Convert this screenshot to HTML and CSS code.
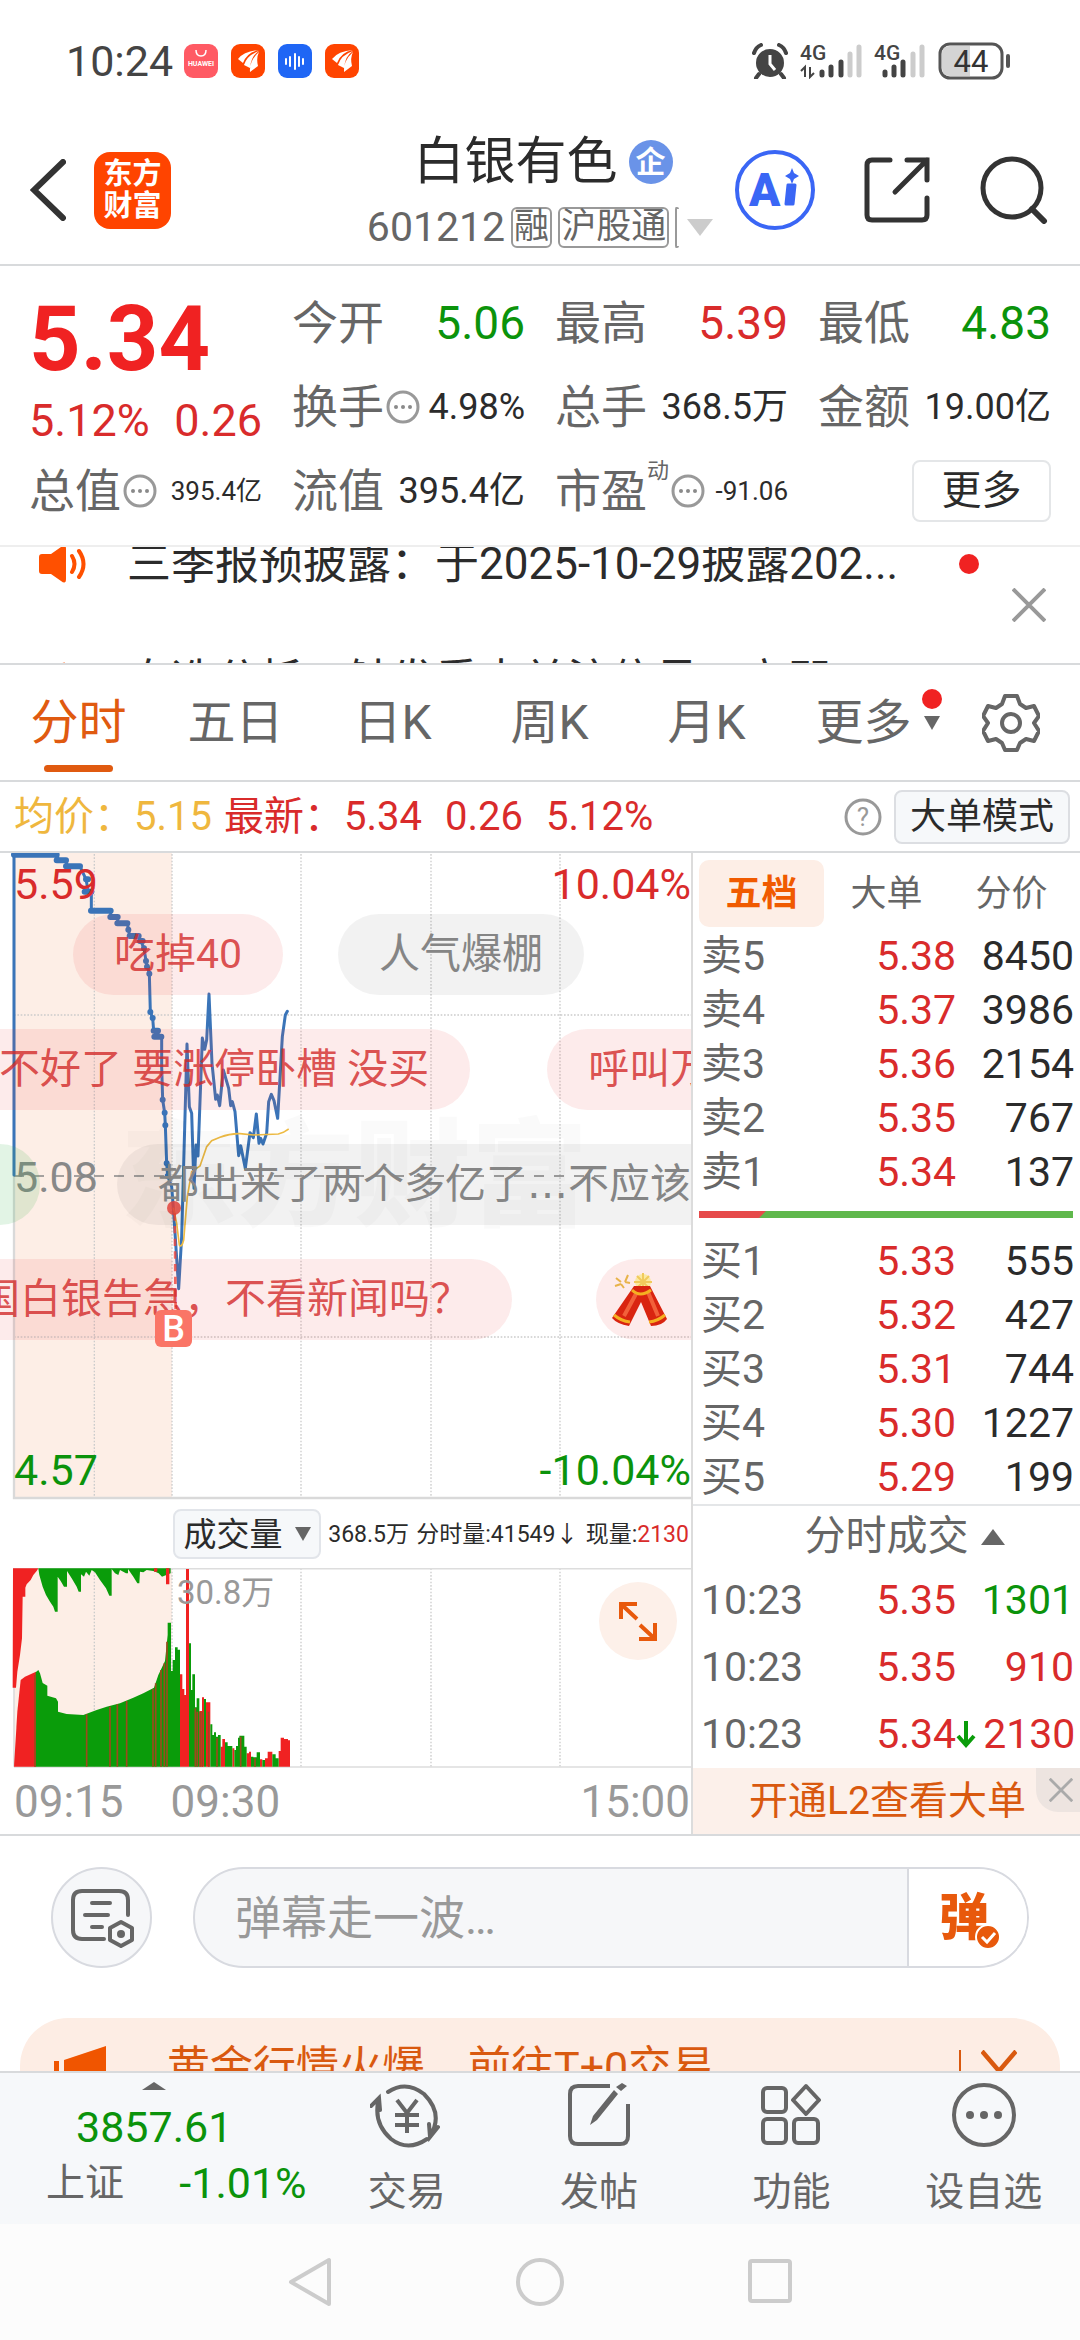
FILE: index.html
```html
<!DOCTYPE html>
<html lang="zh-CN">
<head>
<meta charset="utf-8">
<meta name="viewport" content="width=device-width">
<title>白银有色 601212</title>
<link rel="stylesheet" href="styles.css">
</head>
<body>
<svg width="0" height="0" class="defs" aria-hidden="true">
  <symbol id="info" viewBox="0 0 34 34"><circle cx="17" cy="17" r="15" fill="none" stroke="#999" stroke-width="3"/><g fill="#8a8a8a"><circle cx="10" cy="17" r="2"/><circle cx="17" cy="17" r="2"/><circle cx="24" cy="17" r="2"/></g></symbol>
  <symbol id="horn" viewBox="0 0 48 38"><path d="M3 9h9L22 2q5-4 5 2v30q0 6-5 2l-10-7H3q-3 0-3-3V12q0-3 3-3z" fill="#ff5000"/><path d="M33 11q5 8 0 16M40 6q9 13 0 26" fill="none" stroke="#ff5000" stroke-width="4" stroke-linecap="round"/></symbol>
  <symbol id="cross" viewBox="0 0 34 34"><path d="M1 1l32 32M33 1L1 33" fill="none" stroke="currentColor" stroke-width="4"/></symbol>
  <symbol id="em" viewBox="0 0 34 34"><rect width="34" height="34" rx="9" fill="#ff4400"/><path d="M7 15q6-8 21-9-12 2-16 13zM13 21q3-10 15-14-8 5-9 17zM19 28q-1-11 9-20-3 6-1 14z" fill="#fff"/></symbol>
</svg>

<header class="status">
  <span class="clock">10:24</span>
  <span class="notes">
    <svg width="34" height="34" viewBox="0 0 34 34"><rect width="34" height="34" rx="9" fill="#ff5a64"/><path d="M12 6q0 6 5 6t5-6" fill="none" stroke="#fff" stroke-width="1.5"/><text x="17" y="22" font-size="7" font-weight="700" text-anchor="middle" fill="#fff">HUAWEI</text></svg>
    <svg width="34" height="34"><use href="#em"/></svg>
    <svg width="34" height="34" viewBox="0 0 34 34"><rect width="34" height="34" rx="9" fill="#1f66f5"/><path d="M8 15v5M12 13v9M17 10v15M21 13v9M25 15v5" stroke="#fff" stroke-width="2" stroke-linecap="round"/></svg>
    <svg width="34" height="34"><use href="#em"/></svg>
  </span>
  <span class="radio">
    <svg width="36" height="36" viewBox="0 0 36 36"><circle cx="18" cy="20" r="14" fill="#444"/><path d="M18 12v9l5 6" fill="none" stroke="#fff" stroke-width="3"/><path d="M2 10Q4 4 9 2M34 10Q32 4 27 2M7 31l-3 4M29 31l3 4" stroke="#444" stroke-width="4" fill="none" stroke-linecap="round"/></svg>
    <svg width="62" height="36" viewBox="0 0 62 36"><text x="0" y="17" font-size="21" font-weight="500" fill="#444">4G</text><path d="M5 34V24l-4 4M10 24v10l4-4" fill="none" stroke="#444" stroke-width="2"/><g stroke-width="5" stroke-linecap="round"><path d="M22 29v3M31 24v8M41 19v13" stroke="#444"/><path d="M50 11v21M59 4v28" stroke="#ccc"/></g></svg>
    <svg width="52" height="36" viewBox="0 0 52 36"><text x="0" y="17" font-size="21" font-weight="500" fill="#444">4G</text><g stroke-width="5" stroke-linecap="round"><path d="M11 29v3M20 24v8M29 19v13" stroke="#444"/><path d="M39 11v21M48 4v28" stroke="#ccc"/></g></svg>
    <svg width="74" height="38" viewBox="0 0 74 38"><rect x="2" y="2" width="62" height="34" rx="10" fill="#fff" stroke="#555" stroke-width="3"/><path d="M12 4h20v30H12q-8 0-8-8V12q0-8 8-8z" fill="#d4d4d4"/><path d="M70 14v10" stroke="#555" stroke-width="4" stroke-linecap="round"/><text x="33" y="30" font-size="31" text-anchor="middle" fill="#333">44</text></svg>
  </span>
</header>

<nav class="head">
  <div class="head-left">
    <button class="plain" aria-label="返回"><svg width="36" height="62" viewBox="0 0 36 62"><path d="M33 3L4 31l29 28" fill="none" stroke="#333" stroke-width="6" stroke-linecap="round"/></svg></button>
    <a class="logo" href="#">东方<br>财富</a>
  </div>
  <div class="head-mid">
    <h1>白银有色<span class="ent">企</span></h1>
    <div class="code"><span>601212</span><span class="tag">融</span><span class="tag">沪股通</span><span class="tag cut"></span><i class="down"></i></div>
  </div>
  <div class="head-right">
    <button class="plain" aria-label="AI"><svg width="80" height="80" viewBox="0 0 80 80"><circle cx="40" cy="40" r="38" fill="#fff" stroke="#3a66f5" stroke-width="4"/><text x="14" y="56" font-size="46" font-weight="900" fill="#3a66f5">A</text><path d="M53 35h7l-2 19h-7z" fill="#3a66f5" stroke="#3a66f5" stroke-width="3" stroke-linejoin="round"/><path d="M57 18l2 5 5 3-5 3-2 5-2-5-5-3 5-3z" fill="#3a66f5"/></svg></button>
    <button class="plain" aria-label="分享"><svg width="68" height="68" viewBox="0 0 68 68"><path d="M26 4H8Q3 4 3 9v50q0 5 5 5h50q5 0 5-5V42M43 4h20v20M63 4L31 36" fill="none" stroke="#333" stroke-width="5" stroke-linecap="round"/></svg></button>
    <button class="plain" aria-label="搜索"><svg width="68" height="68" viewBox="0 0 68 68"><circle cx="32" cy="32" r="29" fill="none" stroke="#333" stroke-width="5"/><path d="M52 53l12 12" stroke="#333" stroke-width="6" stroke-linecap="round"/></svg></button>
  </div>
</nav>

<main>
  <section class="quote">
    <div class="last red">5.34</div>
    <div class="q"><span>今开</span><b class="green">5.06</b></div>
    <div class="q"><span>最高</span><b class="red">5.39</b></div>
    <div class="q"><span>最低</span><b class="green">4.83</b></div>
    <div class="chg red"><span>5.12%</span><span>0.26</span></div>
    <div class="q mid"><span>换手</span><svg width="34" height="34"><use href="#info"/></svg><b>4.98%</b></div>
    <div class="q mid"><span>总手</span><b>368.5万</b></div>
    <div class="q mid"><span>金额</span><b>19.00亿</b></div>
    <div class="q small"><span>总值</span><svg width="34" height="34"><use href="#info"/></svg><b>395.4亿</b></div>
    <div class="q mid"><span>流值</span><b>395.4亿</b></div>
    <div class="q small"><span>市盈</span><sup>动</sup><svg width="34" height="34"><use href="#info"/></svg><b>-91.06</b></div>
    <button class="more">更多</button>
  </section>

  <section class="ticker">
    <ul>
      <li><svg width="48" height="38"><use href="#horn"/></svg><a href="#">三季报预披露：于2025-10-29披露202...</a><i class="dot"></i></li>
      <li><svg width="48" height="38"><use href="#horn"/></svg><a href="#">自选分析：触发重大关注信号，立即</a></li>
    </ul>
    <button class="plain" aria-label="关闭"><svg width="34" height="34"><use href="#cross"/></svg></button>
  </section>

  <nav class="tabs">
    <button class="on">分时</button><button>五日</button><button>日K</button><button>周K</button><button>月K</button>
    <button class="has-dot">更多<i class="tri"></i><i class="dot"></i></button>
    <button aria-label="设置"><svg width="58" height="60" viewBox="0 0 58 60"><path d="M23 3h12l3 8 6 4 8-2 5 10-5 7 5 8-5 10-8-2-6 4-3 7H23l-3-7-6-4-8 2-5-10 5-8-5-7 5-10 8 2 6-4z" fill="none" stroke="#666" stroke-width="4" stroke-linejoin="round"/><circle cx="29" cy="30" r="9" fill="none" stroke="#666" stroke-width="4"/></svg></button>
  </nav>

  <section class="info">
    <span class="yellow">均价：5.15</span>
    <span class="red latest"><span>最新：5.34</span><span>0.26</span><span>5.12%</span></span>
    <svg class="help" width="38" height="38" viewBox="0 0 38 38"><circle cx="19" cy="19" r="17" fill="none" stroke="#999" stroke-width="3"/><text x="19" y="28" font-size="26" text-anchor="middle" fill="#999">?</text></svg>
    <button class="mode">大单模式</button>
  </section>

  <section class="board">
    <div class="charts">
      <div class="price">
        <svg viewBox="0 9 2073 1941">
          <path d="M42 9h474v1935H42z" fill="#fdeee6"/>
          <path d="M283 12v1932M516 12v1932M903 12v1932M1293 12v1932M1680 12v1932M42 495h2031M42 1461h2031" stroke="#ccc" stroke-width="4" stroke-dasharray="5 5" fill="none"/>
          <path d="M42 9v1935h2031" fill="none" stroke="#d9d9d9" stroke-width="7"/>
          <path d="M42 978h2031" stroke="#888" stroke-width="5" stroke-dasharray="30 30"/>
          <g fill="none" stroke="#3a74b8" stroke-linecap="round" stroke-linejoin="round">
            <path stroke-width="9" d="M42 975V14H172L175 31H200V49H240L258 88 265 125H274V182H332V201H353V220H382L389 258H416L432 295 438 333 448 371 451 486 458 504 461 542H474V560H485V650L488 749 494 788 496 826 500 940 503 978 515 1010 520 1073 536 1316 545 1160 561 582 568 770 575 790 582 1015 588 885 594 918 607 564 614 598 620 570 627 432 636 640 647 748 652 735 659 767 670 660 686 715 692 767 697 755 705 785 716 917 722 887 736 955 750 848 760 863 769 792 777 880 782 865 789 882 800 850 806 755 814 733 822 752 833 805 847 560 856 495 862 484"/>
            <path stroke-width="18" d="M42 14H170M170 31H198M198 49H240M258 88H264M254 125H274M273 182H332M331 201H353M352 220H382M385 239v.1M389 258H416M420 273H428M432 295v.1M438 333v.1M441 350v.1M448 371v.1M451 486v.1M458 504v.1M461 542H474M463 560H484M488 749v.1M494 788v.1M496 826v.1M500 940v.1M503 978v.1"/>
          </g>
          <path d="M520 1073L530 1120 538 1185Q545 1195 551 1170L562 1040 575 965 600 948 620 890 635 872 660 862Q690 850 720 851L760 855 835 852 850 847 866 837" fill="none" stroke="#eebb44" stroke-width="5"/>
          <path d="M524 1090L527 1385" stroke="#f0453d" stroke-width="8" stroke-dasharray="22 16" opacity=".8"/>
          <circle cx="522" cy="1074" r="21" fill="#f0453d" opacity=".85"/>
        </svg>
        <span class="water">东方财富</span>
        <span class="lab tl red">5.59</span><span class="lab tr red">10.04%</span>
        <span class="lab ml">5.08</span>
        <span class="lab bl green">4.57</span><span class="lab br green">-10.04%</span>
        <div class="danmu">
          <div class="lane lane1"><span class="bub r">吃掉40</span><span class="bub g">人气爆棚</span></div>
          <div class="lane lane2"><span class="bub r">不好了 要涨停卧槽 没买</span><span class="bub r">呼叫万手哥</span></div>
          <div class="lane lane3"><span class="bub n"></span><span class="bub g">都出来了两个多亿了<span class="dots">…</span>不应该</span></div>
          <div class="lane lane4"><span class="bub r">国白银告急，不看新闻吗？</span><span class="bub r fire"><svg width="56" height="56" viewBox="0 0 56 56"><path d="M4 6l5 4M16 3l-3 7M3 14l6-2M12 16l-3-4M18 11l-5-1" stroke="#e8b34a" stroke-width="2"/><circle cx="31" cy="10" r="8" fill="#fbe9a0"/><path d="M31 1v18M22 10h18M25 4l12 12M37 4L25 16" stroke="#f1ca5c" stroke-width="2"/><path d="M22 14l16 0 17 33q-5 7-16 7L29 30 17 54Q5 52 0 46z" fill="#d92410"/><path d="M25 20L12 44M36 20l10 24" stroke="#f2603a" stroke-width="4"/><path d="M2 43q7 6 16 7M37 50q9-1 16-7M20 18q8 8 19 0" stroke="#f5b021" stroke-width="3" fill="none"/></svg>白银</span></div>
        </div>
        <span class="buy">B</span>
      </div>

      <div class="volbar">
        <button class="volsel">成交量<i class="tri"></i></button>
        <span>368.5万</span><span>分时量:41549↓</span><span>现量:<em class="red">2130</em></span>
      </div>

      <div class="vol">
        <svg viewBox="0 39 2073 600">
          <path d="M42 39h474v596H42z" fill="#fdeee6"/>
          <path d="M283 40v595M516 40v595M903 40v595M1293 40v595M1680 40v595" stroke="#ccc" stroke-width="4" stroke-dasharray="5 5"/>
          <path d="M42 41h2031M42 40v595M42 636h2031" fill="none" stroke="#ddd" stroke-width="5"/>
          <g fill="#f02222">
            <path d="M39 40H115L110 48 100 60 92 75 80 88 76 98V125H68L66 250 60 300 52 350 48 398H38Z"/>
            <path d="M42 635L52 470 62 375 75 365 108 350V635Z"/>
            <path d="M540 635V358h7v44h6v18h5V42h9v593zM598 635V468h8V427h6v208zM618 635V442h13v193zM662 635V575h5V552h8v83zM697 635v-55h6v55zM740 635v-40h7v-5h6v45zM780 635v-22h7v22zM795 635v-25h8v-20h14v45zM836 635v-47h6v-40h10v4h12v4h6v79z"/>
          </g>
          <g fill="#0a9c0a">
            <path d="M115 40L118 60 128 95 138 120 150 140 160 155 165 170H173V65L182 78 192 95H201V48L215 70 230 95 236 110H243V58L252 65 258 50 268 62 275 45 285 52 300 75 318 100 328 122H335V42L345 55 355 60 360 45 378 55H384V42L400 65 412 85H418L420 50 430 52 440 45 460 48 476 55 486 65 512 55V40Z"/>
            <path d="M107 635V352L115 345 120 355 128 384 142 392V422L168 430 174 440V470L200 477 250 480 290 465 320 455 360 445 400 428 430 415 462 398 475 360 495 318 503 240V203H513V348H518V315H525V277H533V284H540V635Z"/>
            <path d="M567 635V265h6v140h4v-47h8v99h5v-27h8v205zM612 635V432h6v203zM631 635V508h6v32h5v-8h6v13h6v-5h8v95zM675 635v-73h8v11h14v62zM703 635v-50h5v-12h6v-25h4v-6h15v33h7v60zM753 635v-30h7v2h10v-15h10v43zM787 635v-20h8v20zM817 635v-37h10v12h9v25z"/>
          </g>
          <path d="M498 40h10v48h-10zM462 40h10v10h-10z" fill="#f02222"/>
          <path d="M105 360v275M260 478v157M330 455v180M352 448v187M380 438v197M459 402v233M467 385v250M483 345v290M493 325v310M501 260v375M586 460v175M592 470v165M600 470v165M607 470v165M626 470v165M651 550v85M722 545v90M765 610v25" stroke="#9c4a1c" stroke-width="5"/>
        </svg>
        <span class="vmax">30.8万</span>
        <button class="expand" aria-label="全屏"><svg width="40" height="40" viewBox="0 0 40 40"><path d="M3 18V3h16M4 4l15 14M37 22v16H21M36 37L22 24" fill="none" stroke="#e8590c" stroke-width="4"/></svg></button>
      </div>
      <div class="axis"><span>09:15</span><span class="open">09:30</span><span class="end">15:00</span></div>
    </div>

    <aside class="book">
      <div class="btabs"><button class="on">五档</button><button>大单</button><button>分价</button></div>
      <table>
        <tr><th>卖5</th><td class="red">5.38</td><td>8450</td></tr>
        <tr><th>卖4</th><td class="red">5.37</td><td>3986</td></tr>
        <tr><th>卖3</th><td class="red">5.36</td><td>2154</td></tr>
        <tr><th>卖2</th><td class="red">5.35</td><td>767</td></tr>
        <tr><th>卖1</th><td class="red">5.34</td><td>137</td></tr>
      </table>
      <div class="ratio"><svg viewBox="0 0 374 7" preserveAspectRatio="none"><path d="M0 0h374v7H0z" fill="#5fb84c"/><path d="M0 0h67l-7 7H0z" fill="#e64a4a"/></svg></div>
      <table>
        <tr><th>买1</th><td class="red">5.33</td><td>555</td></tr>
        <tr><th>买2</th><td class="red">5.32</td><td>427</td></tr>
        <tr><th>买3</th><td class="red">5.31</td><td>744</td></tr>
        <tr><th>买4</th><td class="red">5.30</td><td>1227</td></tr>
        <tr><th>买5</th><td class="red">5.29</td><td>199</td></tr>
      </table>
      <button class="deals">分时成交<i class="up"></i></button>
      <table class="ticks">
        <tr><th>10:23</th><td class="red">5.35</td><td class="green">1301</td></tr>
        <tr><th>10:23</th><td class="red">5.35</td><td class="red">910</td></tr>
        <tr><th>10:23</th><td class="red">5.34</td><td class="red"><svg width="20" height="28" viewBox="0 0 20 28"><path d="M10 1v24M2 16l8 9 8-9" fill="none" stroke="#0a9c0a" stroke-width="4"/></svg>2130</td></tr>
      </table>
      <div class="level2"><a href="#">开通L2查看大单</a><button aria-label="关闭"><svg width="24" height="24"><use href="#cross"/></svg></button></div>
    </aside>
  </section>

  <section class="say">
    <button class="round" aria-label="弹幕设置"><svg width="64" height="60" viewBox="0 0 64 60"><path d="M58 27V12q0-9-9-9H12Q3 3 3 12v30q0 9 9 9h22M22 15h18M15 27h23M22 39h10" fill="none" stroke="#666" stroke-width="4" stroke-linecap="round"/><path d="M51 34l11 6v12l-11 6-11-6V40z" fill="none" stroke="#666" stroke-width="4" stroke-linejoin="round"/><circle cx="51" cy="46" r="4" fill="#666"/></svg></button>
    <div class="field">
      <input type="text" placeholder="弹幕走一波…" aria-label="弹幕">
      <button aria-label="弹幕开关"><span>弹</span><svg width="26" height="26" viewBox="0 0 26 26"><circle cx="13" cy="13" r="12" fill="#e8590c" stroke="#fff" stroke-width="2"/><path d="M7 13l5 5 8-9" fill="none" stroke="#fff" stroke-width="3"/></svg></button>
    </div>
  </section>

  <section class="promo">
    <svg width="52" height="50" viewBox="0 0 52 50"><path d="M0 15h5v24H0zM10 14L52 0v50L10 38z" fill="#f05500"/></svg>
    <a href="#">黄金行情火爆，前往T+0交易</a>
    <button class="plain" aria-label="关闭"><svg width="36" height="42" viewBox="0 0 34 34" preserveAspectRatio="none"><use href="#cross"/></svg></button>
  </section>
</main>

<footer class="bottom">
  <a class="index" href="#"><span class="point green num"><i class="up"></i>3857.61</span><span class="line"><span>上证</span><span class="green num">-1.01%</span></span></a>
  <a href="#"><svg width="74" height="66" viewBox="0 0 74 66"><path d="M18 10Q36-2 54 12 74 32 60 54M68 45l-8 10-1-13M57 57Q38 70 21 57 4 42 8 20M1 24l8-8 1 12" fill="none" stroke="#666" stroke-width="4" stroke-linecap="round"/><path d="M27 18l10 13 10-13M25 33h24M25 43h24M37 31v20" fill="none" stroke="#666" stroke-width="4"/></svg>交易</a>
  <a href="#"><svg width="62" height="66" viewBox="0 0 62 66"><path d="M42 4H10Q2 4 2 12v42q0 8 8 8h42q8 0 8-8V22" fill="none" stroke="#666" stroke-width="4"/><path d="M50 12L29 38l-7 5 3-9L46 8zM53 9l-5-4 6-4 5 3z" fill="#666"/></svg>发帖</a>
  <a href="#"><svg width="60" height="66" viewBox="0 0 60 66"><g fill="none" stroke="#666" stroke-width="4"><rect x="2" y="6" width="23" height="24" rx="4"/><rect x="2" y="37" width="23" height="24" rx="4"/><rect x="33" y="37" width="24" height="24" rx="4"/><path d="M45 4l13 14-13 14-13-14z" stroke-linejoin="round"/></g></svg>功能</a>
  <a href="#"><svg width="66" height="66" viewBox="0 0 66 66"><circle cx="33" cy="33" r="30" fill="none" stroke="#666" stroke-width="4"/><g fill="#666"><circle cx="19" cy="33" r="4"/><circle cx="33" cy="33" r="4"/><circle cx="47" cy="33" r="4"/></g></svg>设自选</a>
</footer>
<nav class="sys">
  <button class="plain" aria-label="后退"><svg width="44" height="50" viewBox="0 0 44 50"><path d="M41 3v44L3 25z" fill="none" stroke="#ccc" stroke-width="4" stroke-linejoin="round"/></svg></button>
  <button class="plain" aria-label="主页"><svg width="50" height="50" viewBox="0 0 50 50"><circle cx="25" cy="25" r="22" fill="none" stroke="#ccc" stroke-width="4"/></svg></button>
  <button class="plain" aria-label="任务"><svg width="44" height="50" viewBox="0 0 44 50"><rect x="2" y="4" width="40" height="40" rx="2" fill="none" stroke="#ccc" stroke-width="4"/></svg></button>
</nav>
</body>
</html>
```
FILE: styles.css
```css
* { box-sizing: border-box; }
body {
  margin: 0;
  height: 100vh;
  display: flex;
  flex-direction: column;
  overflow: hidden;
  background: #fff;
  color: #2b2b2b;
  font-family: Roboto, "Noto Sans CJK SC", sans-serif;
  font-size: 41px;
  line-height: 1;
}
svg { display: block; flex: none; }
.defs { position: absolute; }
button { font: inherit; color: inherit; border: 0; padding: 0; background: none; }
button.plain { display: flex; }
a { color: inherit; text-decoration: none; }
i, em { font-style: normal; }
.red { color: #d92b2b; }
.green { color: #0b930b; }
.yellow { color: #efb73e; }
.dot { width: 20px; height: 20px; border-radius: 50%; background: #f02222; }
.down, .tri, .up { border: solid transparent; }
.down { border-width: 17px 13px 0; border-top-color: #ccc; }
.tri { border-width: 14px 8px 0; border-top-color: #666; }
.up { border-width: 0 12px 16px; border-bottom-color: #666; }

.status { display: flex; align-items: center; height: 122px; padding: 0 68px 0 66px; }
.clock { font-size: 43px; color: #444; }
.notes { display: flex; gap: 13px; margin-left: 11px; }
.radio { display: flex; align-items: center; gap: 12px; margin-left: auto; }

.head { display: grid; grid-template-columns: 345fr 390fr 345fr; align-items: center; height: 144px; padding-bottom: 6px; border-bottom: 2px solid #d8dadc; }
.head-left { display: flex; align-items: center; gap: 28px; padding-left: 30px; }
.logo { display: flex; align-items: center; justify-content: center; width: 77px; height: 77px; border-radius: 16px; background: #ff4400; color: #fff; font-size: 29px; font-weight: 700; line-height: 32px; }
.head-mid { display: flex; flex-direction: column; align-items: center; gap: 20px; padding-top: 4px; }
h1 { display: flex; align-items: center; gap: 11px; margin: 0; padding-left: 6px; font-size: 51px; font-weight: 400; line-height: 50px; }
.ent { width: 44px; height: 44px; border-radius: 50%; background: #6a93e8; color: #fff; font-size: 30px; font-weight: 700; line-height: 44px; text-align: center; }
.code { display: flex; align-items: center; gap: 6px; color: #666; }
.tag { height: 41px; padding: 0 1px; border: 2px solid #999; border-radius: 6px; font-size: 35px; line-height: 36px; }
.tag.cut { width: 4px; padding: 0; border-right: 0; }
.code .down { margin-left: 2px; }
.head-right { display: flex; align-items: center; justify-content: space-between; padding-right: 32px; }

main { flex: 1; min-height: 0; overflow: hidden; }
.quote { display: grid; grid-template-columns: repeat(4, minmax(0, 1fr)); column-gap: 30px; row-gap: 22px; padding: 26px 29px 23px; border-bottom: 2px solid #eee; }
.quote > * { height: 62px; }
.last { font-size: 90px; font-weight: 700; line-height: 96px; color: #f02222; }
.chg { display: flex; justify-content: space-between; align-items: flex-end; font-size: 45px; line-height: 35px; }
.q { display: flex; align-items: center; color: #666; font-size: 46px; }
.q b { margin-left: auto; font-weight: 400; }
.q.mid b { font-size: 36px; color: #2b2b2b; }
.q.small b { font-size: 26px; color: #2b2b2b; }
.q svg { margin-left: 2px; }
.q sup { align-self: flex-start; font-size: 22px; }
.more { justify-self: end; width: 139px; border: 2px solid #e4e6e8; border-radius: 8px; font-size: 40px; }

.ticker { display: flex; align-items: center; height: 118px; overflow: hidden; border-bottom: 2px solid #d8dadc; }
.ticker ul { flex: 1; align-self: flex-start; margin: -42px 0 0; padding: 0 0 0 39px; list-style: none; }
.ticker li { display: flex; align-items: center; height: 117px; font-size: 44px; }
.ticker li a { width: 832px; margin-left: 40px; white-space: nowrap; }
.ticker button { padding-right: 34px; color: #999; }

.tabs { display: grid; grid-template-columns: repeat(6, 157fr) 138fr; height: 117px; border-bottom: 2px solid #d8dadc; font-size: 48px; color: #666; }
.tabs button { display: flex; align-items: center; justify-content: center; position: relative; }
.tabs .on { color: #e05a10; }
.tabs .on::after { content: ""; position: absolute; bottom: 8px; left: 44px; right: 44px; height: 7px; border-radius: 4px; background: #e05a10; }
.tabs .tri { position: absolute; right: 2px; }
.tabs .dot { position: absolute; top: 24px; right: 0; }

.info { display: flex; align-items: center; gap: 12px; height: 71px; padding: 0 10px 0 14px; border-bottom: 2px solid #d8dadc; font-size: 40px; }
.latest { display: flex; gap: 23px; }
.help { margin-left: auto; }
.mode { width: 176px; height: 54px; border: 2px solid #dcdee2; border-radius: 8px; background: #f6f8fa; font-size: 36px; }

.board { display: grid; grid-template-columns: minmax(0, 691fr) minmax(0, 389fr); border-bottom: 2px solid #d8dadc; }
.price, .vol { position: relative; }
.price > svg, .vol > svg { width: 100%; height: auto; }
.lab { position: absolute; font-size: 43px; line-height: 44px; }
.tl, .tr { top: 9px; }
.ml { top: 302px; color: #888; }
.bl, .br { bottom: 8px; }
.tl, .ml, .bl { left: 14px; }
.tr, .br { right: 0; }
.water { position: absolute; left: 120px; top: 264px; font-size: 117px; font-weight: 900; line-height: 120px; color: rgba(0, 0, 0, .02); }
.danmu { position: absolute; inset: 61px 0 auto 0; display: grid; gap: 34px; overflow: hidden; }
.lane { display: flex; white-space: pre; min-width: 0; }
.bub { flex: none; height: 81px; padding: 0 41px; border-radius: 41px; line-height: 81px; }
.bub.r { background: rgba(240, 60, 60, .1); color: rgba(210, 40, 40, .8); }
.bub.g { background: rgba(0, 0, 0, .05); color: #858585; }
.bub.n { width: 80px; padding: 0; background: rgba(60, 180, 80, .15); }
.dots { font-family: "DejaVu Sans", sans-serif; }
.lane1 { gap: 55px; padding-left: 73px; }
.lane2 { gap: 77px; margin-left: -42px; }
.lane3 { gap: 77px; margin-left: -40px; }
.lane4 { gap: 84px; margin-left: -62px; }
.fire { display: flex; align-items: center; gap: 22px; padding-left: 16px; }
.buy { position: absolute; left: 155px; top: 457px; width: 37px; height: 37px; border-radius: 6px; background: #fa7566; color: #fff; font-size: 36px; font-weight: 500; line-height: 38px; text-align: center; }

.volbar { display: flex; align-items: center; justify-content: space-between; height: 68px; padding: 0 2px 0 173px; font-size: 23px; }
.volsel { display: flex; align-items: center; justify-content: center; gap: 12px; width: 148px; height: 50px; border: 2px solid #e2e5ea; border-radius: 8px; background: #f6f8fa; font-size: 33px; }
.vmax { position: absolute; left: 177px; top: 7px; font-size: 33px; line-height: 36px; color: #999; }
.expand { position: absolute; right: 14px; top: 14px; width: 78px; height: 78px; border-radius: 50%; background: #fdf0e9; display: grid; place-items: center; }
.axis { display: flex; align-items: center; height: 66px; padding: 2px 1px 0 14px; font-size: 44px; color: #999; }
.open { margin-left: 47px; }
.end { margin-left: auto; }

.book { display: flex; flex-direction: column; border-left: 2px solid #dcdcdc; }
.btabs { display: grid; grid-template-columns: repeat(3, 1fr); margin: 7px 6px 2px; font-size: 36px; color: #666; }
.btabs button { height: 67px; }
.btabs .on { border-radius: 10px; background: #fdeee6; color: #f05a00; font-weight: 700; }
table { width: 100%; border-collapse: collapse; table-layout: fixed; }
tr { height: 54px; }
th, td { padding: 0; font-weight: 400; text-align: right; white-space: nowrap; }
th { width: 45%; padding-left: 8px; text-align: left; color: #666; }
td:nth-child(2) { width: 23%; }
td:last-child { padding-right: 6px; }
td svg { display: inline-block; margin-right: 7px; }
.ratio { padding: 12px 7px 16px 6px; }
.ratio svg { width: 100%; height: 7px; }
.deals { display: flex; align-items: center; justify-content: center; gap: 12px; height: 63px; padding-left: 36px; border-top: 2px solid #e4e6e8; color: #666; }
.ticks tr { height: 67px; }
.level2 { position: relative; flex: 1; display: flex; align-items: center; padding-left: 56px; background: #fcf0ea; color: #d9590f; font-size: 39px; }
.level2 button { position: absolute; top: 0; right: 0; width: 44px; height: 44px; padding-left: 6px; border-bottom-left-radius: 22px; background: #ede4e0; color: #aaa; display: grid; place-items: center; }

.say { display: flex; gap: 41px; padding: 31px 51px 50px; }
.round { display: grid; place-items: center; width: 101px; height: 101px; border: 2px solid #d8dae0; border-radius: 50%; background: #f6f7f9; }
.field { display: flex; flex: 1; height: 101px; border: 2px solid #d8dae0; border-radius: 51px; background: #f6f7f9; overflow: hidden; }
.field input { flex: 1; min-width: 0; padding: 0 40px; border: 0; background: none; font: inherit; font-size: 46px; }
.field input::placeholder { color: #999; opacity: 1; }
.field button { display: flex; align-items: center; width: 120px; padding-left: 30px; border-left: 2px solid #d8dae0; background: #fff; color: #e8590c; font-size: 50px; font-weight: 900; }
.field button svg { margin: 38px 0 0 -14px; }

.promo { display: flex; align-items: flex-start; height: 101px; margin: 0 20px; padding: 28px 43px 0 34px; border-radius: 48px; background: #fdede4; color: #d9590f; font-size: 43px; }
.promo a { margin-left: 61px; }
.promo button { margin-left: auto; padding-left: 20px; border-left: 2px solid #d9590f; margin-top: 4px; }

.bottom { display: grid; grid-template-columns: 310fr repeat(4, 192fr); height: 153px; border-top: 2px solid #d8dadc; background: #f6f8fa; color: #666; font-size: 39px; }
.bottom > a { display: flex; flex-direction: column; align-items: center; gap: 25px; padding-top: 9px; }
.bottom > .index { align-items: flex-start; gap: 13px; padding: 9px 4px 0 46px; }
.point { display: flex; flex-direction: column; align-items: center; gap: 16px; padding-left: 30px; }
.index .up { border-width: 0 12px 8px; }
.index .num { font-size: 43px; }
.line { display: flex; align-items: center; justify-content: space-between; width: 100%; }
.sys { display: flex; align-items: center; justify-content: center; gap: 183px; height: 116px; background: #fcfcfc; }
```
